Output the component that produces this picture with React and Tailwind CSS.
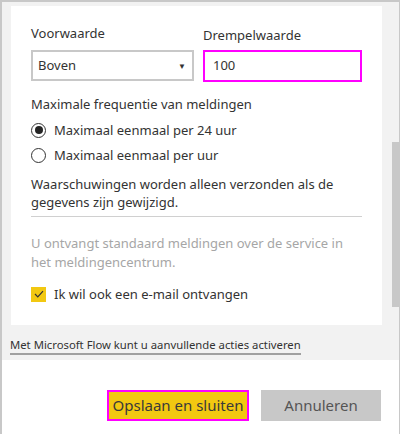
import React from "react";

export default function App() {
  return (
    <div className="w-[400px] h-[434px] bg-white text-[#333] border-l-2 border-t-2 border-r border-[#c8c8c8] flex flex-col" style={{ fontFamily: '"Noto Sans", sans-serif' }}>
      <div className="bg-[#f2f2f2] h-[358px] flex flex-col relative">
        <div className="absolute right-0 top-[140px] w-[7px] h-[165px] bg-[#c8c8c8]" />
        <div className="mt-[4px] ml-[9px] w-[371px] h-[319px] bg-white pl-[20px] pr-[18px] pt-[18px]">
          <div className="flex gap-[9px]">
            <div className="w-[163px]">
              <div className="text-[13px] leading-[18px] h-[18px]">Voorwaarde</div>
              <div className="mt-[8px] h-[31px] border-2 border-[#c8c8c8] flex items-center justify-between pl-[5px] pr-[6px]">
                <span className="text-[13px]">Boven</span>
                <span className="text-[8px]">▼</span>
              </div>
            </div>
            <div className="w-[159px]">
              <div className="text-[13px] leading-[18px] h-[18px] mt-[2px]">Drempelwaarde</div>
              <div className="mt-[6px] h-[32px] border-2 border-[#ff00ff] flex items-center pl-[8px]">
                <span className="text-[13px]">100</span>
              </div>
            </div>
          </div>
          <div className="text-[13px] leading-[18px] mt-[13px]">Maximale frequentie van meldingen</div>
          <div className="flex items-center gap-[8px] mt-[8px]">
            <div className="w-[15px] h-[15px] rounded-full border border-[#333] flex items-center justify-center">
              <div className="w-[8px] h-[8px] rounded-full bg-[#252525]" />
            </div>
            <span className="text-[13px] leading-[18px]">Maximaal eenmaal per 24 uur</span>
          </div>
          <div className="flex items-center gap-[8px] mt-[7px]">
            <div className="w-[15px] h-[15px] rounded-full border border-[#333]" />
            <span className="text-[13px] leading-[18px]">Maximaal eenmaal per uur</span>
          </div>
          <div className="text-[13px] leading-[18px] mt-[11px]">Waarschuwingen worden alleen verzonden als de gegevens zijn gewijzigd.</div>
          <div className="h-px bg-[#d0d0d0] mt-[5px] w-[331px]" />
          <div className="text-[13px] leading-[19px] mt-[17px] text-[#a6a6a6]">U ontvangt standaard meldingen over de service in het meldingencentrum.</div>
          <div className="flex items-center gap-[8px] mt-[13px]">
            <div className="w-[15px] h-[15px] bg-[#f2c811] flex items-center justify-center">
              <svg width="10" height="8" viewBox="0 0 10 8"><path d="M1 4 L3.8 6.8 L9 1.2" stroke="#333" strokeWidth="1.2" fill="none" /></svg>
            </div>
            <span className="text-[13px] leading-[18px]">Ik wil ook een e-mail ontvangen</span>
          </div>
        </div>
        <div className="ml-[8px] mt-[9px] leading-[18px]">
          <span className="text-[11.3px] leading-[18px] border-b-2 border-[#a0a0a0] pb-[1px]">Met Microsoft Flow kunt u aanvullende acties activeren</span>
        </div>
      </div>
      <div className="flex gap-[12px] justify-end pr-[18px] mt-[30px]">
        <div className="w-[142px] h-[31px] bg-[#f2c811] border-2 border-[#ff00ff] flex items-center justify-center text-[15px] text-[#3a3a3a]">Opslaan en sluiten</div>
        <div className="w-[120px] h-[31px] bg-[#c8c8c8] flex items-center justify-center text-[15px] text-[#555]">Annuleren</div>
      </div>
    </div>
  );
}
